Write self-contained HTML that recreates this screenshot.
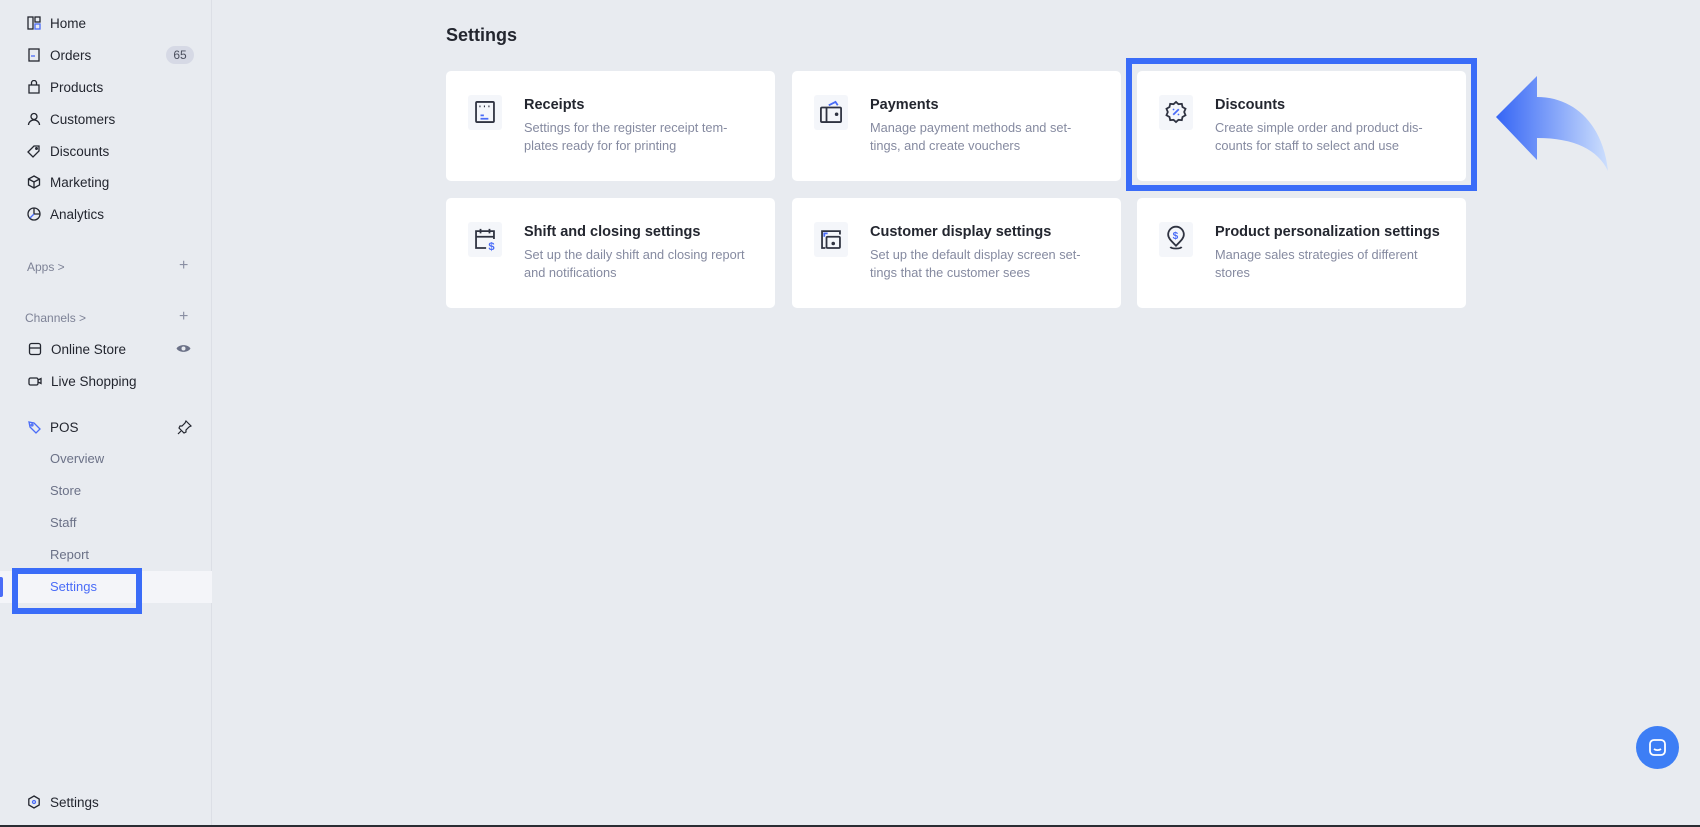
<!DOCTYPE html>
<html><head><meta charset="utf-8"><style>
*{margin:0;padding:0;box-sizing:border-box}
body{width:1700px;height:827px;overflow:hidden;background:#e8ebf0;font-family:"Liberation Sans",sans-serif;position:relative;color:#23262f}
.sb{position:absolute;left:0;top:0;width:212px;height:827px;background:#e8ebf0;border-right:1px solid #dcdfe6}
.it{position:absolute;left:27px;font-size:13.5px;color:#23262f;display:flex;align-items:center;height:20px}
.it svg{width:14px;height:14px;margin-right:9px}
.sub{position:absolute;left:50px;font-size:13px;color:#6b7187}
.sec{position:absolute;font-size:12px;color:#7d8296}
.plus{position:absolute;left:179px;font-size:16px;color:#8a8fa3}
.card{position:absolute;background:#fff;border-radius:5px;width:329px;height:110px}
.ib{position:absolute;left:22px;top:23.5px;width:34px;height:35px;background:#f4f6fa;border-radius:3px;display:flex;align-items:center;justify-content:center}
.ib svg{transform:scale(1.12)}
.t{position:absolute;left:78px;top:26px;font-size:14.5px;font-weight:bold;color:#23262f}
.d{position:absolute;left:78px;top:48px;font-size:12.8px;color:#858aa0;line-height:17.5px;width:245px}
</style></head><body>
<div class="sb">
<div class="it" style="top:13px"><svg viewBox="0 0 14 14" fill="none" stroke="#23262f" stroke-width="1.3"><rect x="1" y="1" width="5" height="12"/><rect x="8" y="1" width="5" height="5"/><rect x="8" y="8" width="5" height="5" stroke="#4a6cf7"/></svg>Home</div>
<div class="it" style="top:45px"><svg viewBox="0 0 14 14" fill="none" stroke="#23262f" stroke-width="1.3"><rect x="2" y="1" width="10" height="12"/><path d="M4 8h4" stroke="#4a6cf7"/></svg>Orders</div>
<div style="position:absolute;left:166px;top:46px;width:28px;height:18px;border-radius:9px;background:#d6d9e5;font-size:12px;color:#4b4f5e;text-align:center;line-height:18px">65</div>
<div class="it" style="top:77px"><svg viewBox="0 0 14 14" fill="none" stroke="#23262f" stroke-width="1.3"><path d="M2 5h10v8H2zM4.5 5V3a2.5 2.5 0 015 0v2"/></svg>Products</div>
<div class="it" style="top:109px"><svg viewBox="0 0 14 14" fill="none" stroke="#23262f" stroke-width="1.3"><circle cx="7" cy="4.5" r="3"/><path d="M1.5 13a5.5 5 0 0111 0"/></svg>Customers</div>
<div class="it" style="top:141px"><svg viewBox="0 0 14 14" fill="none" stroke="#23262f" stroke-width="1.3"><path d="M1 8l6-6h5v5l-6 6z"/><circle cx="9.5" cy="4.5" r=".8"/></svg>Discounts</div>
<div class="it" style="top:172px"><svg viewBox="0 0 14 14" fill="none" stroke="#23262f" stroke-width="1.3"><path d="M7 1l5.5 3v6L7 13 1.5 10V4zM1.5 4L7 7l5.5-3M7 7v6"/></svg>Marketing</div>
<div class="it" style="top:204px"><svg viewBox="0 0 14 14" fill="none" stroke="#23262f" stroke-width="1.3"><circle cx="7" cy="7" r="6"/><path d="M7 1v6h6"/><path d="M7 7L3 11" stroke="#4a6cf7"/></svg>Analytics</div>
<div class="sec" style="left:27px;top:260px">Apps &gt;</div><div class="plus" style="top:257px">+</div>
<div class="sec" style="left:25px;top:311px">Channels &gt;</div><div class="plus" style="top:308px">+</div>
<div class="it" style="top:339px;left:28px"><svg viewBox="0 0 14 14" fill="none" stroke="#23262f" stroke-width="1.3"><rect x="1.5" y="1.5" width="11" height="11" rx="2"/><path d="M1.5 6h11"/></svg>Online Store</div>
<svg style="position:absolute;left:176px;top:343px" width="15" height="11" viewBox="0 0 15 11"><path d="M0.5 5.5C3 1 12 1 14.5 5.5 12 10 3 10 .5 5.5z" fill="#6b7187"/><circle cx="7.5" cy="5.5" r="2" fill="#e8ebf0"/></svg>
<div class="it" style="top:371px;left:28px"><svg viewBox="0 0 14 14" fill="none" stroke="#23262f" stroke-width="1.3"><rect x="1" y="4" width="9" height="7" rx="1.5"/><path d="M10 6l3-1.5v5L10 8"/></svg>Live Shopping</div>
<div class="it" style="top:417px"><svg viewBox="0 0 14 14" fill="none" stroke="#4a6cf7" stroke-width="1.3"><path d="M2 2l5 1 6 6-4 4-6-6z"/><circle cx="5" cy="5" r="1"/></svg>POS</div>
<svg style="position:absolute;left:177px;top:420px" width="15" height="15" viewBox="0 0 15 15" fill="none" stroke="#23262f" stroke-width="1.2"><path d="M9 1l5 5-2 1-3 3 0 2-2 1-5-5 1-2h2l3-3z"/><path d="M4 11l-3 3"/></svg>
<div class="sub" style="top:451px">Overview</div>
<div class="sub" style="top:483px">Store</div>
<div class="sub" style="top:515px">Staff</div>
<div class="sub" style="top:547px">Report</div>
<div style="position:absolute;left:0;top:571px;width:212px;height:32px;background:#f4f5f9"></div>
<div style="position:absolute;left:0;top:577px;width:3px;height:20px;background:#4a6cf7;border-radius:0 2px 2px 0"></div>
<div class="sub" style="top:579px;color:#4a6cf7">Settings</div>
<div style="position:absolute;left:12px;top:568px;width:130px;height:46px;border:6px solid #3a6cf8"></div>
<div class="it" style="top:792px"><svg viewBox="0 0 14 14" fill="none" stroke="#23262f" stroke-width="1.3"><path d="M7 1l5.2 3v6L7 13 1.8 10V4z"/><circle cx="7" cy="7" r="1.5" stroke="#4a6cf7"/></svg>Settings</div>
</div>
<div style="position:absolute;left:446px;top:25px;font-size:18px;font-weight:bold;color:#23262f">Settings</div>

<div class="card" style="left:446px;top:71px"><div class="ib"><svg width="20" height="22" viewBox="0 0 20 22" fill="none" stroke="#2f3341" stroke-width="1.6"><rect x="2" y="2" width="16" height="18" rx="1"/><path d="M5 6h1M9 6h1M13 6h1" /><path d="M6 14h3M6 17h7" stroke="#4a6cf7"/></svg></div><div class="t">Receipts</div><div class="d">Settings for the register receipt tem-<br>plates ready for for printing</div></div>
<div class="card" style="left:792px;top:71px"><div class="ib"><svg width="22" height="22" viewBox="0 0 22 22" fill="none" stroke="#2f3341" stroke-width="1.6"><rect x="2" y="7" width="18" height="13" rx="1"/><path d="M7 7v13"/><circle cx="16" cy="13" r=".8" fill="#2f3341"/><path d="M9 5l6-3 2 3" stroke="#4a6cf7"/></svg></div><div class="t">Payments</div><div class="d">Manage payment methods and set-<br>tings, and create vouchers</div></div>
<div class="card" style="left:1137px;top:71px"><div class="ib"><svg width="22" height="22" viewBox="0 0 22 22" fill="none" stroke="#2f3341" stroke-width="1.6"><path d="M11 2l2.2 2 3-.3.6 2.9 2.7 1.5-1.2 2.9 1.2 2.9-2.7 1.5-.6 2.9-3-.3L11 20l-2.2-2-3 .3-.6-2.9-2.7-1.5L3.7 11 2.5 8.1l2.7-1.5.6-2.9 3 .3z"/><path d="M8.5 13.5l5-5" stroke="#4a6cf7"/><circle cx="8.8" cy="8.8" r=".8" fill="#4a6cf7" stroke="none"/><circle cx="13.2" cy="13.2" r=".8" fill="#4a6cf7" stroke="none"/></svg></div><div class="t">Discounts</div><div class="d">Create simple order and product dis-<br>counts for staff to select and use</div></div>
<div class="card" style="left:446px;top:198px"><div class="ib"><svg width="22" height="22" viewBox="0 0 22 22" fill="none" stroke="#2f3341" stroke-width="1.6"><path d="M12 19H3V4h16v7M3 9h16M7 2v4M15 2v4"/><text x="14" y="21" font-size="10" font-weight="bold" fill="#4a6cf7" stroke="none" font-family="Liberation Sans">$</text></svg></div><div class="t">Shift and closing settings</div><div class="d">Set up the daily shift and closing report<br>and notifications</div></div>
<div class="card" style="left:792px;top:198px"><div class="ib"><svg width="22" height="22" viewBox="0 0 22 22" fill="none" stroke="#2f3341" stroke-width="1.6"><path d="M6 19H3V4h16v3"/><rect x="7" y="9" width="12" height="10" rx="1"/><path d="M5 9V6h3" stroke="#4a6cf7"/><circle cx="13" cy="15" r=".8" fill="#2f3341"/></svg></div><div class="t">Customer display settings</div><div class="d">Set up the default display screen set-<br>tings that the customer sees</div></div>
<div class="card" style="left:1137px;top:198px"><div class="ib"><svg width="22" height="24" viewBox="0 0 22 24" fill="none" stroke="#2f3341" stroke-width="1.6"><path d="M11 18C6 13 4 11 4 8a7 7 0 0114 0c0 3-2 5-7 10z"/><path d="M6 19c1 2 9 2 10 0"/><text x="8" y="12" font-size="9" font-weight="bold" fill="#4a6cf7" stroke="none" font-family="Liberation Sans">$</text></svg></div><div class="t">Product personalization settings</div><div class="d">Manage sales strategies of different<br>stores</div></div>

<div style="position:absolute;left:1126px;top:58px;width:351px;height:133px;border:6px solid #3a6cf8"></div>
<svg style="position:absolute;left:1490px;top:70px" width="125" height="110" viewBox="1490 70 125 110"><defs><linearGradient id="g" x1="0" x2="1"><stop offset="0" stop-color="#3565f5"/><stop offset="1" stop-color="#cddffd"/></linearGradient></defs><path d="M1496 117L1537 76V97C1575 97 1603 125 1608 171C1598 150 1575 138 1537 138V160Z" fill="url(#g)"/></svg>
<div style="position:absolute;left:1636px;top:726px;width:43px;height:43px;border-radius:50%;background:#3d7ef5"><svg style="position:absolute;left:12px;top:12px" width="19" height="19" viewBox="0 0 19 19" fill="none" stroke="#fff" stroke-width="1.8"><rect x="2" y="2" width="15" height="15" rx="4"/><path d="M6 11c2 1.5 5 1.5 7 0"/></svg></div>
<div style="position:absolute;left:0;top:825px;width:1700px;height:2px;background:#2a2c33"></div>
</body></html>
